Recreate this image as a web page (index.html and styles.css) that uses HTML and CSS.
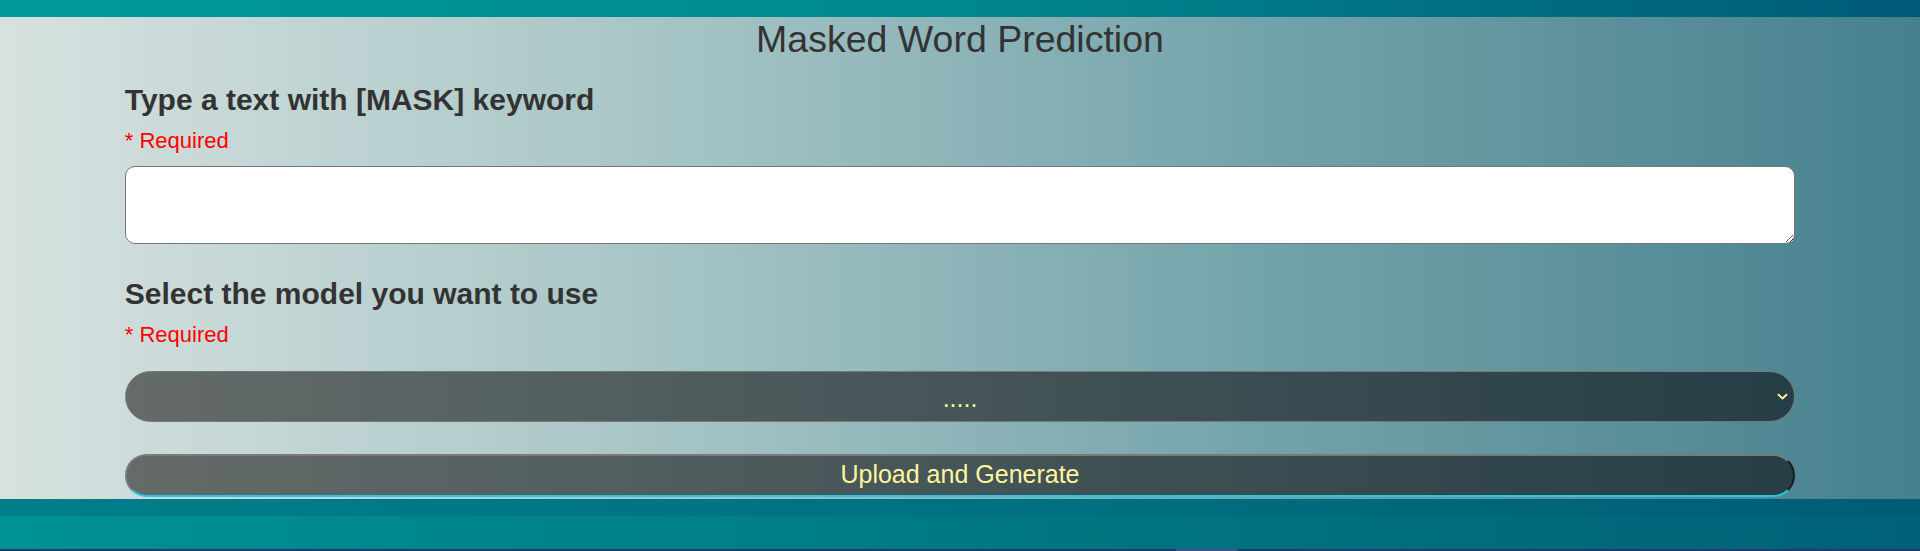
FILE: index.html
```html
<!DOCTYPE html>
<html lang="en">
<head>
<meta charset="utf-8">
<title>Masked Word Prediction</title>
<link rel="stylesheet" href="styles.css">
</head>
<body>
<header class="topbar"></header>
<main class="page">
  <h1 class="title">Masked Word Prediction</h1>
  <form class="form">
    <label class="field-label first" for="text">Type a text with [MASK] keyword</label>
    <p class="required">* Required</p>
    <textarea id="text" class="text-input"></textarea>
    <label class="field-label second" for="model">Select the model you want to use</label>
    <p class="required">* Required</p>
    <div class="select-wrap">
      <select id="model" class="model-select"><option>.....</option></select>
      <svg class="chevron" width="11" height="7" viewBox="0 0 11 7"><path d="M1 1.2 L5.5 5.4 L10 1.2" fill="none" stroke="#fff59d" stroke-width="2"/></svg>
    </div>
    <button type="button" class="submit">Upload and Generate</button>
  </form>
</main>
<footer class="footer">
  <div class="footer-top"></div>
  <div class="footer-main"></div>
  <div class="footer-line"><span class="footer-seg"></span></div>
</footer>
</body>
</html>
```

FILE: styles.css
```css
* { box-sizing: border-box; }
html, body { margin: 0; padding: 0; }
body {
  font-family: "Liberation Sans", Arial, sans-serif;
  color: #333;
  background: linear-gradient(to right, #d7e2e0 0%, #a6c4c5 35%, #74a4ab 65%, #46808e 100%);
  height: 551px;
  overflow: hidden;
}
.topbar {
  height: 17px;
  background: linear-gradient(to right, #009a9a, #00878f 50%, #005a77);
}
.page { display: block; }
.title {
  margin: 0;
  font-size: 37.5px;
  line-height: 44px;
  font-weight: normal;
  text-align: center;
  color: #333;
}
.form {
  width: 87%;
  margin: 0 auto;
  display: flex;
  flex-direction: column;
}
.field-label {
  display: block;
  font-size: 30px;
  line-height: 34px;
  font-weight: bold;
  color: #333;
}
.field-label.first { margin-top: 22px; }
.field-label.second { margin-top: 33px; }
.required {
  margin: 11px 0 0;
  font-size: 22px;
  line-height: 25px;
  color: #ff0000;
}
.text-input {
  display: block;
  margin-top: 13px;
  width: 100%;
  height: 78px;
  border: 1px solid #767676;
  border-radius: 10px;
  background: #fff;
}
.select-wrap {
  position: relative;
  margin-top: 24px;
}
.model-select {
  display: block;
  width: 100%;
  height: 51px;
  border: 1px solid #787878;
  border-radius: 26px;
  background: linear-gradient(to right, #646b69, #263e46);
  color: #fff59d;
  font-family: "Liberation Sans", Arial, sans-serif;
  font-size: 25px;
  text-align: center;
  text-align-last: center;
  -webkit-appearance: none;
  appearance: none;
  outline: none;
  padding-top: 3px;
}
.chevron {
  position: absolute;
  right: 7px;
  top: 22px;
}
.submit {
  display: block;
  margin-top: 32px;
  width: 100%;
  height: 43px;
  border: 2px solid #7a7a7a;
  border-right-color: #1d1d1d;
  border-bottom-color: #22c8e8;
  border-radius: 22px;
  background: linear-gradient(to right, #646b69, #263e46);
  color: #fff59d;
  font-family: "Liberation Sans", Arial, sans-serif;
  font-size: 25px;
  line-height: 1;
  padding: 0 0 2px;
}
.footer {
  margin-top: 2px;
  display: flex;
  flex-direction: column;
}
.footer-top {
  height: 17px;
  background: linear-gradient(to right, #007f8b, #006f80 57%, #005c77);
}
.footer-main {
  height: 33px;
  background: linear-gradient(to right, #009295, #00767f 57%, #006078);
}
.footer-line {
  height: 2px;
  background: #22386e;
  display: flex;
  padding-left: 1176px;
}
.footer-seg {
  width: 61px;
  height: 2px;
  background: #4b4a8f;
}
```
